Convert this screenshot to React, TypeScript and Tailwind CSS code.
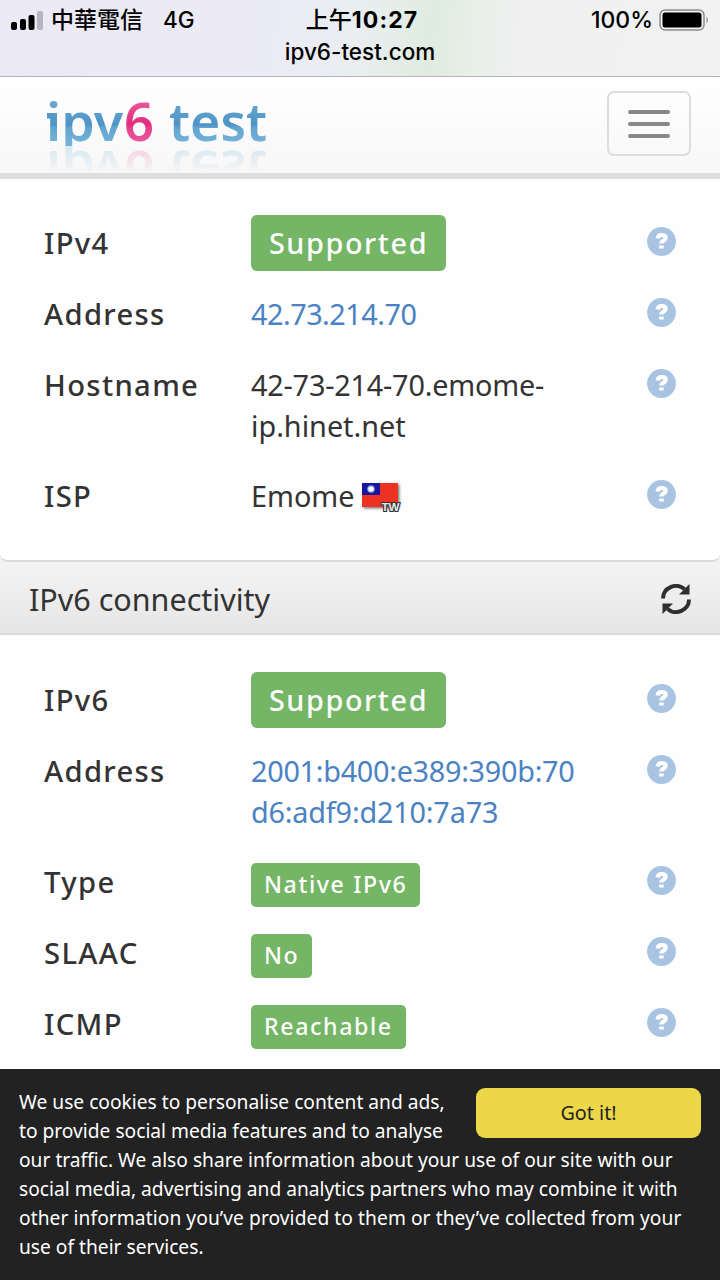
import type { ReactNode } from "react";

function HelpIcon() {
  return (
    <svg className="mt-[18.500px] h-[29px] w-[29px] shrink-0" viewBox="0 0 29 29">
      <circle cx="14.5" cy="14.5" r="14.4" fill="#a9c4e2" />
      <path
        d="M10.700 11.500c.2-2.400 1.600-3.500 4-3.500 2.400 0 4 1 4 2.900 0 3-4.400 2.500-4.400 5.600"
        fill="none"
        stroke="#fff"
        strokeWidth="4.200"
      />
      <rect x="12" y="18.600" width="4.800" height="3" rx=".8" fill="#fff" />
    </svg>
  );
}

function RefreshIcon() {
  return (
    <svg className="mt-[2px] h-[30px] w-[30px]" viewBox="0 0 30 30">
      <path
        d="M2 14.500A13 12.500 0 0 1 23.500 5M28 15.500A13 12.500 0 0 1 6.500 25"
        fill="none"
        stroke="#2f2f2f"
        strokeWidth="3.900"
      />
      <path d="M28.500 0v10.500H18zM1.500 30V19.500H12z" fill="#2f2f2f" />
    </svg>
  );
}

function TaiwanFlag() {
  return (
    <svg className="mt-[20px] ml-[6px] h-[34px] w-[44px]" viewBox="0 0 44 34">
      <defs>
        <filter id="flag-shadow" x="-10%" y="-10%" width="130%" height="140%">
          <feDropShadow dx="1.500" dy="1.500" stdDeviation="1.300" floodOpacity=".5" />
        </filter>
      </defs>
      <g filter="url(#flag-shadow)">
        <rect x="1" y="2" width="36" height="24" fill="#ec3323" />
        <rect x="1" y="2" width="18" height="12" fill="#1414a0" />
      </g>
      <circle cx="10" cy="8" r="3.800" fill="#8f9ae0" />
      <circle cx="10" cy="8" r="2.600" fill="#fff" />
      <text
        x="20.500"
        y="29.500"
        textLength="18"
        lengthAdjust="spacingAndGlyphs"
        className="font-['Liberation_Sans'] text-[11px] font-bold"
        fill="#e8e8e8"
        stroke="#333"
        strokeWidth="2.200"
        paintOrder="stroke"
      >
        TW
      </text>
    </svg>
  );
}

function Logo() {
  return (
    <div className="ml-[47px] h-[69px] [-webkit-box-reflect:below_0px_linear-gradient(transparent_62%,rgba(0,0,0,0.25))]">
      <svg className="h-[69px] w-[224px]" viewBox="0 0 224 69">
        <defs>
          <linearGradient id="blue" gradientUnits="userSpaceOnUse" x1="0" y1="24" x2="0" y2="66">
            <stop offset="0" stopColor="#68a9d2" />
            <stop offset=".56" stopColor="#4d93c6" />
            <stop offset=".64" stopColor="#62a5d0" />
            <stop offset="1" stopColor="#74b2d8" />
          </linearGradient>
          <linearGradient id="pink" gradientUnits="userSpaceOnUse" x1="0" y1="24" x2="0" y2="66">
            <stop offset="0" stopColor="#ea5a9c" />
            <stop offset=".56" stopColor="#e5297f" />
            <stop offset=".64" stopColor="#e5408c" />
            <stop offset="1" stopColor="#ea5a9e" />
          </linearGradient>
        </defs>
        <g className="font-['Noto_Sans',sans-serif] text-[52px] font-semibold">
          <text x="-1" y="64" fill="url(#blue)" textLength="77" lengthAdjust="spacingAndGlyphs">
            ipv
          </text>
          <text x="77" y="64" fill="url(#pink)" textLength="30" lengthAdjust="spacingAndGlyphs">
            6
          </text>
          <text x="122" y="64" fill="url(#blue)" textLength="98" lengthAdjust="spacingAndGlyphs">
            test
          </text>
        </g>
        {/* serif on the i */}
        <rect x="0" y="36" width="6" height="5.500" fill="#5398c9" />
      </svg>
    </div>
  );
}

function StatusBar() {
  return (
    <div className="h-[77px] border-b border-[#b5b5b8] bg-[linear-gradient(95deg,#ebe9f5_0%,#ebebf5_38%,#e9eef0_50%,#dfecdf_60%,#e9efe9_66%,#f0f0f1_73%,#f2f2f3_100%)] font-['Inter','Noto_Sans_CJK_TC',sans-serif] text-black">
      <div className="grid h-[39px] grid-cols-3 items-center text-[22px]">
        <div className="flex items-center pl-[11px]">
          <svg className="h-[19px] w-[33px]" viewBox="0 0 33 19">
            <rect x="0" y="11" width="6" height="8" rx="2" />
            <rect x="9" y="8" width="6" height="11" rx="2" />
            <rect x="17.500" y="4" width="6" height="15" rx="2" />
            <rect x="26" y="0" width="6" height="19" rx="2" fill="#b6b5c0" />
          </svg>
          <span className="ml-[7px] text-[23px] font-medium">中華電信</span>
          <span className="ml-[20px] text-[22.500px] font-medium">4G</span>
        </div>
        <div className="pl-[4px] text-center text-[23px] font-bold tracking-[1.100px] whitespace-nowrap">
          <span className="font-medium tracking-normal">上午</span>10:27
        </div>
        <div className="flex items-center justify-end pr-[10px]">
          <span className="text-[23px] font-medium">100%</span>
          <svg className="ml-[6px] h-[22px] w-[51px]" viewBox="0 0 51 22">
            <rect x="1" y="1" width="44" height="20" rx="5" fill="none" stroke="#8c8c8c" strokeWidth="1.500" />
            <rect x="3.500" y="3.500" width="39" height="15" rx="2.500" />
            <path d="M47.500 7.500q3 3.500 0 7z" fill="#8c8c8c" />
          </svg>
        </div>
      </div>
      <div className="text-center text-[22.500px] leading-[25px] font-medium">ipv6-test.com</div>
    </div>
  );
}

function Row({ label, children }: { label: string; children: ReactNode }) {
  return (
    <div className="flex min-h-[71px] pr-[44px] pl-[44px]">
      <div className="w-[207px] shrink-0 pt-[15px] text-[29.200px] font-medium tracking-[1.350px]">{label}</div>
      <div className="flex-1">{children}</div>
      <HelpIcon />
    </div>
  );
}

function Value({ children }: { children: ReactNode }) {
  return <div className="pt-[15px] pb-[15px] whitespace-nowrap">{children}</div>;
}

function BigBadge({ children }: { children: ReactNode }) {
  return (
    <div className="mt-[7px] flex h-[56px] w-[195px] items-center justify-center rounded-[6px] bg-[#74b566] font-medium tracking-[1.600px] text-white">
      {children}
    </div>
  );
}

function Badge({ children }: { children: ReactNode }) {
  return (
    <span className="mt-[16px] inline-block h-[44px] rounded-[5px] bg-[#74b566] px-[13px] text-[23.200px] leading-[43px] font-medium tracking-[1.600px] text-white">
      {children}
    </span>
  );
}

export default function App() {
  return (
    <div className="flex h-[1280px] w-[720px] flex-col overflow-hidden bg-[#f2f2f2] font-['Noto_Sans',sans-serif] text-[28.800px] leading-[40.600px] text-[#333]">
      <StatusBar />
      <nav className="flex h-[102px] shrink-0 items-start justify-between border-b-[6px] border-[#dedede] bg-gradient-to-b from-white to-[#f7f7f7]">
        <Logo />
        <div className="mt-[14px] mr-[29px] flex h-[65px] w-[84px] flex-col items-center justify-center gap-[8px] rounded-[7px] border-2 border-[#ddd]">
          <span className="h-[4px] w-[42px] rounded-full bg-[#888]" />
          <span className="h-[4px] w-[42px] rounded-full bg-[#888]" />
          <span className="h-[4px] w-[42px] rounded-full bg-[#888]" />
        </div>
      </nav>

      <section className="h-[383px] shrink-0 rounded-b-[8px] border-b-2 border-[#dadada] bg-[#fefefe] pt-[29px]">
        <Row label="IPv4">
          <BigBadge>Supported</BigBadge>
        </Row>
        <Row label="Address">
          <Value>
            <span className="tracking-[-0.500px] text-[#4a82c3]">42.73.214.70</span>
          </Value>
        </Row>
        <Row label="Hostname">
          <Value>
            <span className="tracking-[-0.200px]">42-73-214-70.emome-</span>
            <br />
            ip.hinet.net
          </Value>
        </Row>
        <Row label="ISP">
          <div className="flex">
            <Value>Emome</Value>
            <TaiwanFlag />
          </div>
        </Row>
      </section>

      <section className="h-[507px] shrink-0 bg-[#fefefe]">
        <div className="flex h-[73px] items-center justify-between border-b-2 border-[#dadada] bg-gradient-to-b from-[#f4f4f4] to-[#e6e6e6] pr-[29px] pl-[29px]">
          <h2 className="pt-[3px] text-[30.500px]">IPv6 connectivity</h2>
          <RefreshIcon />
        </div>
        <div className="pt-[30px]">
          <Row label="IPv6">
            <BigBadge>Supported</BigBadge>
          </Row>
          <Row label="Address">
            <Value>
              <span className="tracking-[-0.280px] text-[#4a82c3]">
                2001:b400:e389:390b:70
                <br />
                <span className="tracking-[-0.180px]">d6:adf9:d210:7a73</span>
              </span>
            </Value>
          </Row>
          <Row label="Type">
            <Badge>Native IPv6</Badge>
          </Row>
          <Row label="SLAAC">
            <Badge>No</Badge>
          </Row>
          <Row label="ICMP">
            <Badge>Reachable</Badge>
          </Row>
        </div>
      </section>

      <footer className="h-[211px] shrink-0 bg-[#222] px-[19px] pt-[19px] text-[19.200px] leading-[28.900px] whitespace-nowrap text-white">
        <div className="flex justify-between">
          <p>
            We use cookies to personalise content and ads,
            <br />
            to provide social media features and to analyse
          </p>
          <button className="h-[50px] w-[225px] rounded-[9px] bg-[#ebd747] pt-px text-[19.800px] text-[#222]">
            Got it!
          </button>
        </div>
        <p>
          our traffic. We also share information about your use of our site with our
          <br />
          social media, advertising and analytics partners who may combine it with
          <br />
          <span className="tracking-[0.070px]">
            other information you’ve provided to them or they’ve collected from your
          </span>
          <br />
          use of their services.
        </p>
      </footer>
    </div>
  );
}
